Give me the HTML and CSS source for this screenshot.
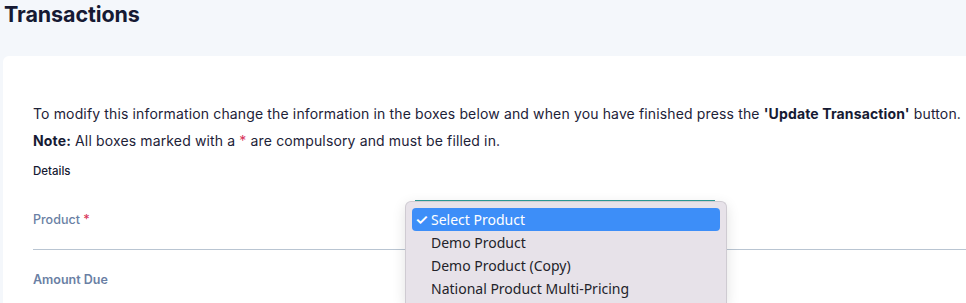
FILE: index.html
```html
<!DOCTYPE html>
<html>
<head>
<meta charset="utf-8">
<link rel="stylesheet" href="styles.css">
</head>
<body>
<h1 class="title">Transactions</h1>
<div class="card">
  <p class="intro">To modify this information change the information in the boxes below and when you have finished press the <b>'Update Transaction'</b> button.</p>
  <p class="intro"><b>Note:</b> All boxes marked with a <span class="req">*</span> are compulsory and must be filled in.</p>
  <div class="section">Details</div>
  <div class="field field-line">
    <label class="lbl">Product <span class="req">*</span></label>
  </div>
  <div class="field">
    <label class="lbl lbl-bold">Amount Due</label>
  </div>
</div>
<div class="select-edge"></div>
<div class="popup">
  <div class="opt opt-sel"><span class="check">✓</span>Select Product</div>
  <div class="opt">Demo Product</div>
  <div class="opt">Demo Product (Copy)</div>
  <div class="opt">National Product Multi-Pricing</div>
</div>
</body>
</html>
```
FILE: styles.css
```css
html, body {
  margin: 0;
  padding: 0;
  background: #f4f7fb;
  overflow: hidden;
  height: 303px;
}
body {
  font-family: Inter, "Noto Sans", sans-serif;
  position: relative;
}
.title {
  margin: 0;
  padding: 0 0 0 4px;
  font-size: 21.5px;
  font-weight: 700;
  line-height: 28px;
  color: #161a33;
  letter-spacing: -0.1px;
}
.card {
  margin: 28px 0 0 3px;
  background: #fff;
  border-radius: 6px 0 0 0;
  padding: 44px 0 0 30px;
  height: 203px;
}
.intro {
  margin: 0;
  font-size: 14px;
  line-height: 27px;
  color: #1d2238;
  white-space: nowrap;
  letter-spacing: 0.14px;
}
.intro b {
  font-weight: 700;
  color: #161a33;
}
.req {
  color: #d8355a;
}
.section {
  margin-top: 7px;
  font-size: 11.5px;
  line-height: 20px;
  font-weight: 500;
  color: #161a33;
}
.field {
  padding-top: 18px;
  height: 18px;
}
.field-line {
  padding-top: 27px;
  height: 41px;
  border-bottom: 1px solid #b9c5d2;
}
.lbl {
  font-size: 12.5px;
  line-height: 18px;
  font-weight: 500;
  color: #6a7fa4;
}
.lbl-bold {
  font-weight: 600;
}
.select-edge {
  position: absolute;
  left: 415px;
  top: 200px;
  width: 300px;
  height: 2px;
  background: #2e9c96;
}
.popup {
  position: absolute;
  left: 405px;
  top: 201px;
  width: 308px;
  height: 95px;
  padding: 6px 6px 0 6px;
  background: #e7e2e9;
  border: 1px solid #cfcbd2;
  border-bottom: 0;
  border-radius: 6px 6px 0 0;
  box-shadow: 0 4px 14px rgba(0,0,0,0.12);
  font-family: "Noto Sans", Inter, sans-serif;
  font-size: 14px;
}
.opt {
  height: 23px;
  line-height: 23px;
  padding-left: 19px;
  color: #23222a;
  position: relative;
  white-space: nowrap;
}
.opt-sel {
  background: #3d8ef8;
  color: #fff;
  border-radius: 4px;
}
.check {
  position: absolute;
  left: 3px;
  top: 0;
  font-size: 15px;
  font-weight: 600;
}
```
